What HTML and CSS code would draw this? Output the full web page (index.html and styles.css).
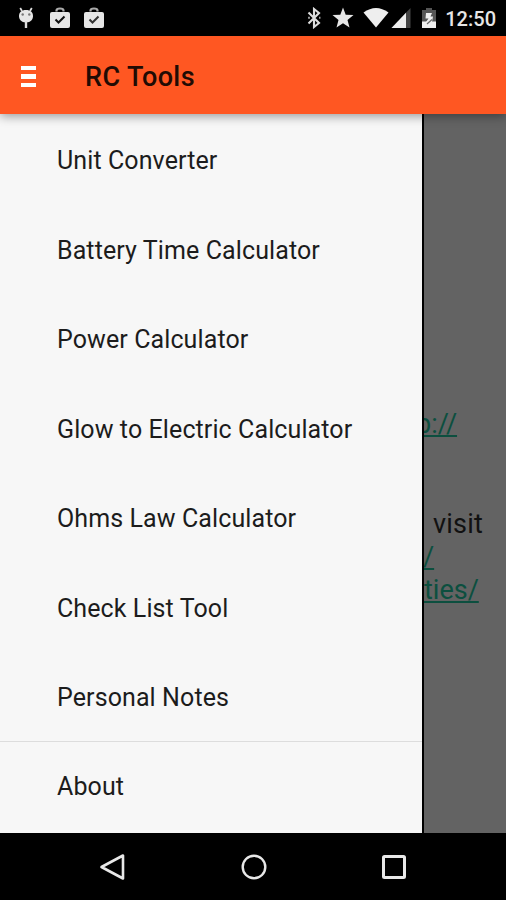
FILE: index.html
```
<!DOCTYPE html>
<html lang="en">
<head>
    <meta charset="UTF-8">
    <meta name="viewport" content="width=device-width, initial-scale=1.0">
    <title>RC Tools</title>
    <link rel="stylesheet" href="styles.css">
</head>
<body>
    <div class="status-bar">
        <div class="notifications">
            <svg width="18" height="24" viewBox="0 0 18 24">
                <path d="M3.200 2l1.800 3M14.800 2L13 5" stroke="#ddd" stroke-width="1.800"/>
                <path d="M9 4c4.500 0 7 2.300 7 6 0 3.500-2.200 6.500-7 6.500S2 13.500 2 10c0-3.700 2.500-6 7-6z" fill="#e6e6e6"/>
                <path d="M9 15v7" stroke="#ddd" stroke-width="2.400"/>
                <circle cx="5.700" cy="8.500" r="1.200" fill="#777"/>
                <circle cx="12.300" cy="8.500" r="1.200" fill="#777"/>
            </svg>
            <svg width="22" height="24" viewBox="0 0 22 24">
                <path d="M7.500 5.500V4.500q0-2 3.500-2t3.500 2v1" fill="none" stroke="#aaa" stroke-width="2.200"/>
                <rect x="1" y="6" width="20" height="16" rx="2" fill="#e6e6e6"/>
                <path d="M6.500 13.500l3 3 6-6" fill="none" stroke="#111" stroke-width="2"/>
            </svg>
            <svg width="22" height="24" viewBox="0 0 22 24">
                <path d="M7.500 5.500V4.500q0-2 3.500-2t3.500 2v1" fill="none" stroke="#aaa" stroke-width="2.200"/>
                <rect x="1" y="6" width="20" height="16" rx="2" fill="#e6e6e6"/>
                <path d="M6.500 13.500l3 3 6-6" fill="none" stroke="#333" stroke-width="2"/>
            </svg>
        </div>
        <div class="system">
            <svg class="bluetooth" width="14" height="22" viewBox="0 0 14 22">
                <path d="M1.500 5.500l10.500 10.500L7 20V2l5 4L1.500 16.500" fill="none" stroke="#ddd" stroke-width="2.100"/>
                <path d="M12 9.800h1.500v2H12zM1 9.800h2v2H1z" fill="#999"/>
            </svg>
            <svg class="star" width="22" height="22" viewBox="0 0 22 22">
                <path d="M11 .5l2.700 7.200 7.800.4-6 4.900 2 7.500-6.500-4.200-6.500 4.200 2-7.500-6-4.900 7.800-.4z" fill="#e6e6e6"/>
            </svg>
            <svg class="wifi" width="26" height="22" viewBox="0 0 26 22">
                <path d="M.5 5.500Q13-3.500 25.500 5.500L13 20.500z" fill="#eee"/>
            </svg>
            <svg class="signal" width="20" height="22" viewBox="0 0 20 22">
                <path d="M19.500 1v20h-19z" fill="#444"/>
                <path d="M15 5.700V21H.5z" fill="#eee"/>
            </svg>
            <svg class="battery" width="14" height="22" viewBox="0 0 14 22">
                <path d="M4 1h6v2h4v12H0V3h4z" fill="#555"/>
                <path d="M0 14.500h14V21H0z" fill="#eee"/>
                <path d="M4 6h6L8.500 9.500H11L10 15H4l2.500-3.500H3.500z" fill="#eee"/>
                <path d="M5 17l5-4.500" stroke="#666" stroke-width="1.200"/>
            </svg>
            <span class="clock">12:50</span>
        </div>
    </div>

    <div class="app-bar">
        <div class="menu-icon">
            <span></span>
            <span></span>
            <span></span>
        </div>
        <h1>RC Tools</h1>
    </div>

    <div class="main">
        <nav class="drawer">
            <a class="item">Unit Converter</a>
            <a class="item">Battery Time Calculator</a>
            <a class="item">Power Calculator</a>
            <a class="item">Glow to Electric Calculator</a>
            <a class="item">Ohms Law Calculator</a>
            <a class="item">Check List Tool</a>
            <a class="item">Personal Notes</a>
            <a class="item about">About</a>
        </nav>
        <div class="page">
            <p class="site"><span class="link">p://</span></p>
            <p class="visit">visit</p>
            <p class="path"><span class="link">/</span></p>
            <p class="ties"><span class="link">ties/</span></p>
        </div>
    </div>

    <div class="nav-bar">
        <svg width="30" height="30" viewBox="0 0 30 30">
            <path d="M25 3.500v23L3.500 15z" fill="none" stroke="#e8e8e8" stroke-width="2.600" stroke-linejoin="round"/>
        </svg>
        <svg width="30" height="30" viewBox="0 0 30 30">
            <circle cx="15" cy="15" r="11.300" fill="none" stroke="#e8e8e8" stroke-width="2.400"/>
        </svg>
        <svg width="30" height="30" viewBox="0 0 30 30">
            <rect x="4.500" y="4.500" width="21" height="21" rx="1" fill="none" stroke="#e8e8e8" stroke-width="3"/>
        </svg>
    </div>
</body>
</html>
```
FILE: styles.css
```
* {
    box-sizing: border-box;
}

body {
    margin: 0;
    height: 900px;
    display: flex;
    flex-direction: column;
    font-family: Roboto, sans-serif;
    background-color: #000000;
    overflow: hidden;
}

svg {
    display: block;
}

.status-bar {
    height: 36px;
    display: flex;
    justify-content: space-between;
    align-items: center;
    padding: 0 10px 0 17px;
}

.notifications {
    display: flex;
    gap: 12px;
}

.notifications svg:first-child {
    margin-right: 2px;
}

.system {
    display: flex;
    align-items: center;
}

.star {
    margin-left: 11px;
}

.wifi {
    margin-left: 9px;
}

.signal {
    margin-left: 2px;
}

.battery {
    margin-left: 11px;
}

.clock {
    margin: 2px 0 0 9px;
    color: #e6e6e6;
    font-size: 20px;
    font-weight: 500;
    line-height: 24px;
}

.app-bar {
    height: 78px;
    flex: none;
    display: flex;
    align-items: center;
    padding: 3px 0 0 21px;
    background-color: #ff5722;
    box-shadow: 0 2px 10px rgba(0, 0, 0, 0.4);
    z-index: 1;
}

.menu-icon {
    width: 15px;
    display: flex;
    flex-direction: column;
    gap: 4px;
}

.menu-icon span {
    height: 4.500px;
    background-color: #ffffff;
}

h1 {
    margin: 0 0 0 49px;
    color: #210b04;
    font-size: 27px;
    font-weight: 500;
    letter-spacing: 0.4px;
}

.main {
    height: 719px;
    flex: none;
    display: flex;
}

.drawer {
    width: 424px;
    flex: none;
    padding-top: 2px;
    background-color: #f7f7f7;
    border-right: 2px solid #000000;
}

.item {
    display: flex;
    align-items: center;
    height: 89.500px;
    padding-left: 57px;
    color: #1c1c1c;
    font-size: 25px;
    letter-spacing: 0.1px;
}

.about {
    height: 91px;
    margin-top: -2px;
    border-top: 1px solid #dddddd;
}

.page {
    flex: 1;
    min-width: 0;
    padding-top: 294px;
    background-color: #636363;
    color: #111111;
    font-size: 27px;
    line-height: 33px;
    overflow: hidden;
}

.page p {
    margin: 0;
    white-space: nowrap;
}

.link {
    color: #0c4f3f;
    text-decoration: underline;
}

.page .site {
    margin-left: -8px;
}

.page .visit {
    margin: 67px 0 0 9px;
    letter-spacing: 0.2px;
}

.page .path {
    margin-left: -1px;
}

.nav-bar {
    height: 67px;
    display: flex;
    justify-content: center;
    align-items: center;
    gap: 110.500px;
    padding-left: 1px;
}
```
